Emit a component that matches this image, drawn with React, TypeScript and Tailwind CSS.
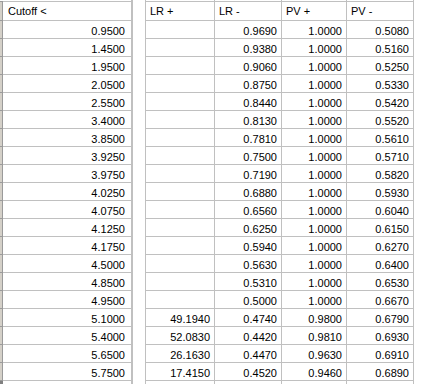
import React from "react";

const cutoffs = [
  "0.9500", "1.4500", "1.9500", "2.0500", "2.5500", "3.4000", "3.8500",
  "3.9250", "3.9750", "4.0250", "4.0750", "4.1250", "4.1750", "4.5000",
  "4.8500", "4.9500", "5.1000", "5.4000", "5.6500", "5.7500",
];

const rows = [
  ["", "0.9690", "1.0000", "0.5080"],
  ["", "0.9380", "1.0000", "0.5160"],
  ["", "0.9060", "1.0000", "0.5250"],
  ["", "0.8750", "1.0000", "0.5330"],
  ["", "0.8440", "1.0000", "0.5420"],
  ["", "0.8130", "1.0000", "0.5520"],
  ["", "0.7810", "1.0000", "0.5610"],
  ["", "0.7500", "1.0000", "0.5710"],
  ["", "0.7190", "1.0000", "0.5820"],
  ["", "0.6880", "1.0000", "0.5930"],
  ["", "0.6560", "1.0000", "0.6040"],
  ["", "0.6250", "1.0000", "0.6150"],
  ["", "0.5940", "1.0000", "0.6270"],
  ["", "0.5630", "1.0000", "0.6400"],
  ["", "0.5310", "1.0000", "0.6530"],
  ["", "0.5000", "1.0000", "0.6670"],
  ["49.1940", "0.4740", "0.9800", "0.6790"],
  ["52.0830", "0.4420", "0.9810", "0.6930"],
  ["26.1630", "0.4470", "0.9630", "0.6910"],
  ["17.4150", "0.4520", "0.9460", "0.6890"],
];

const columns = [
  { title: "LR +", w: "w-[69px]", last: false },
  { title: "LR -", w: "w-[67px]", last: false },
  { title: "PV +", w: "w-[65px]", last: false },
  { title: "PV -", w: "w-[68px]", last: true },
];

function Column({
  title,
  values,
  className,
}: {
  title: string;
  values: string[];
  className: string;
}) {
  return (
    <div className={"flex h-[384px] flex-col pt-px border-[#c0c0c0] " + className}>
      <div className="h-[20px] border-y border-[#c0c0c0] pl-[4px] pt-[3px] leading-[13px]">
        {title}
      </div>
      {values.map((v, i) => (
        <div
          key={i}
          className="h-[18px] border-b border-[#c0c0c0] pr-[4px] pt-[4px] text-right leading-[13px]"
        >
          {v}
        </div>
      ))}
    </div>
  );
}

export default function App() {
  return (
    <div className="flex h-[392px] w-[426px] overflow-hidden bg-white font-['Liberation_Sans',Arial,sans-serif] text-[11px] text-black">
      {/* row header edge */}
      <div className="flex h-[384px] w-[3px] flex-col pt-px">
        <div className="h-[20px] border-y border-r border-[#9a9a9a] bg-[#d4d0c8]" />
        {cutoffs.map((_, i) => (
          <div key={i} className="h-[18px] border-b border-r border-[#9a9a9a] bg-[#d4d0c8]" />
        ))}
        <div className="h-[3px] w-[3px] bg-[#808080]" />
      </div>

      <Column title="Cutoff <" values={cutoffs} className="w-[130px] border-r-2 [&>div]:pr-[6px] [&>div:first-child]:pl-[5px]" />

      <div className="w-[12px]" />

      {columns.map((c, ci) => (
        <Column
          key={c.title}
          title={c.title}
          values={rows.map((r) => r[ci])}
          className={c.w + " border-l" + (c.last ? " border-r" : "")}
        />
      ))}
    </div>
  );
}
